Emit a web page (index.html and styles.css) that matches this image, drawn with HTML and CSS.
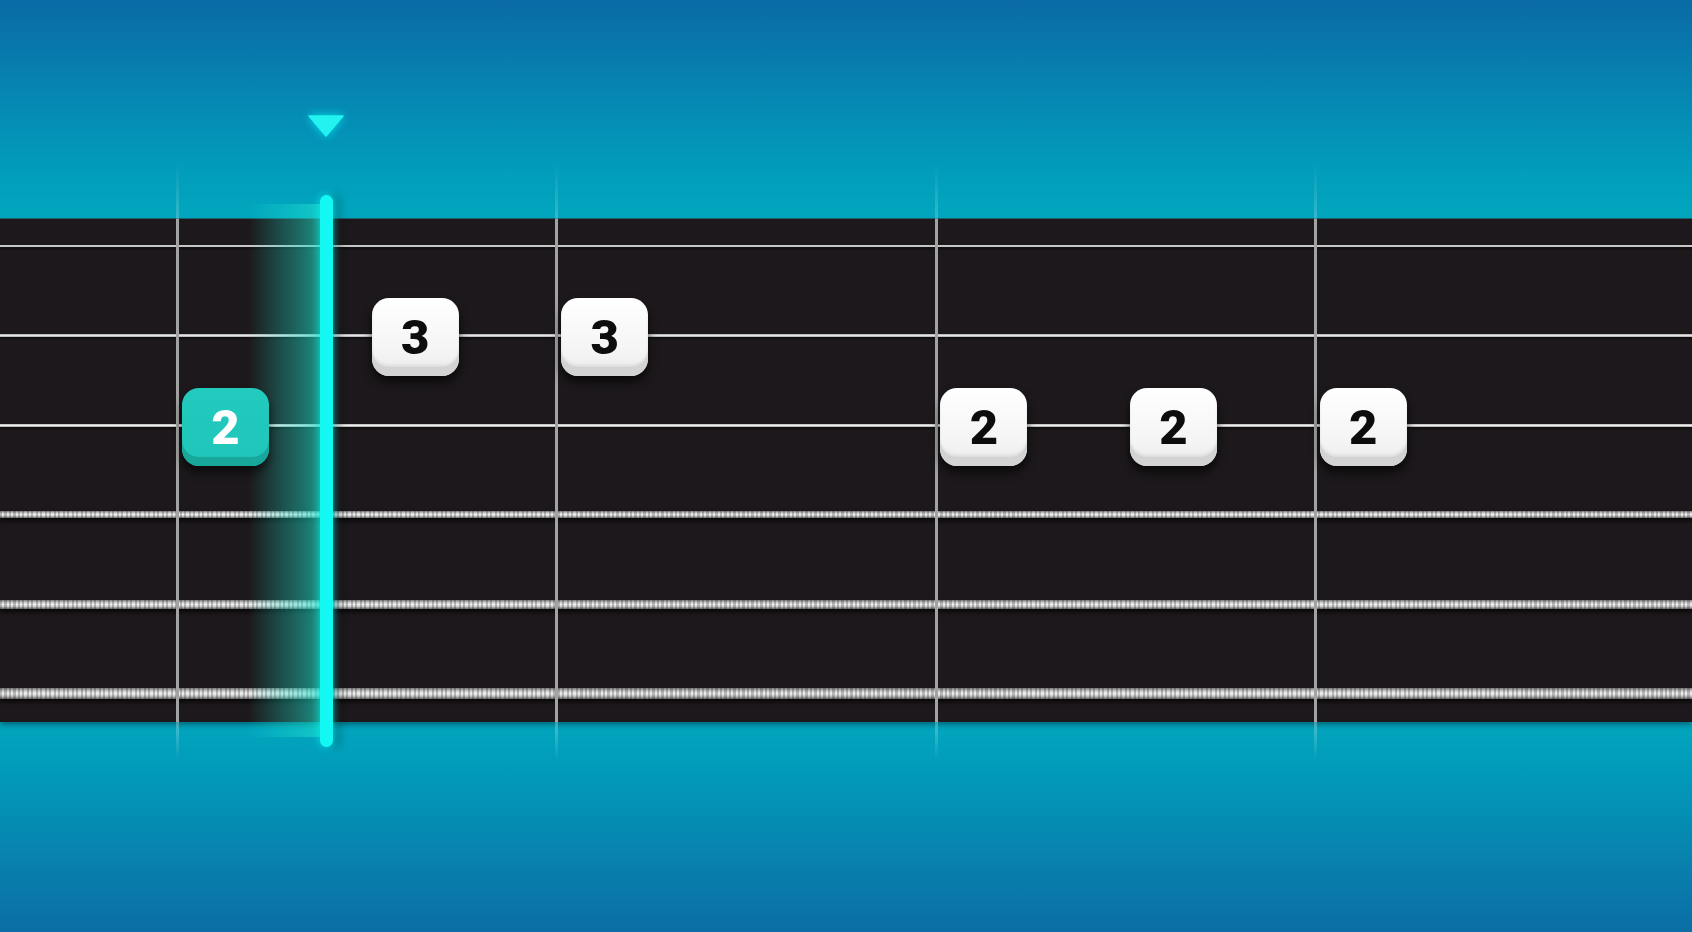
FILE: index.html
```html
<!DOCTYPE html>
<html>
<head>
  <meta charset="UTF-8">
  <meta name="viewport" content="width=device-width, initial-scale=1.0">
  <title>Tab Player</title>
  <link rel="stylesheet" href="styles.css">
</head>
<body>
  <div class="stage" id="stage">
    <div class="sky"></div>
    <div class="fretboard" id="fretboard">
      <div class="string"><span class="line plain thin"></span></div>
      <div class="string"><span class="line plain"></span></div>
      <div class="string"><span class="line plain thick"></span></div>
      <div class="string"><span class="line wound w4"></span></div>
      <div class="string"><span class="line wound w5"></span></div>
      <div class="string"><span class="line wound w6"></span></div>
    </div>
    <div class="ground"></div>

    <!-- playhead sits over everything -->
    <div class="trail"></div>
    <div class="playhead"></div>
    <svg class="marker" width="36" height="22" viewBox="0 0 36 22">
      <polygon points="1,1 35,1 18,21" fill="#22f3f1" stroke="#22f3f1" stroke-width="1.5" stroke-linejoin="round"/>
    </svg>
  </div>

  <script>
    // bar lines, one every measure
    var stage = document.getElementById('stage');
    var barStart = 177, barWidth = 379.6;
    for (var i = 0; i < 4; i++) {
      var bar = document.createElement('div');
      bar.className = 'bar';
      bar.style.left = (barStart + i * barWidth - 1.5) + 'px';
      stage.insertBefore(bar, stage.querySelector('.trail'));
    }

    // notes: beat index, string (1 = top), fret
    var notes = [
      { beat: 0, string: 3, fret: 2, played: true },
      { beat: 1, string: 2, fret: 3 },
      { beat: 2, string: 2, fret: 3 },
      { beat: 4, string: 3, fret: 2 },
      { beat: 5, string: 3, fret: 2 },
      { beat: 6, string: 3, fret: 2 }
    ];
    var stringY = [27, 117, 207, 296, 385, 475];
    var board = document.getElementById('fretboard');
    notes.forEach(function(n) {
      var el = document.createElement('div');
      el.className = 'note' + (n.played ? ' played' : '');
      el.textContent = n.fret;
      el.style.left = (225.5 + n.beat * 189.6 - 43.5) + 'px';
      el.style.top = (stringY[n.string - 1] - 38) + 'px';
      board.appendChild(el);
    });
  </script>
</body>
</html>
```

FILE: styles.css
```css
body {
  margin: 0;
  overflow: hidden;
  font-family: Roboto, "Noto Sans", sans-serif;
}
.stage {
  position: relative;
  height: 932px;
  display: flex;
  flex-direction: column;
  background: linear-gradient(180deg, #0a6aa5 0%, #0686b2 10%, #029cbb 18%, #01a7be 23.5%, #01a6be 77.5%, #0298b9 84%, #0882ae 92%, #0a6ea5 100%);
}
.sky {
  height: 219px;
  flex: none;
}
.ground {
  flex: 1;
}
.fretboard {
  position: relative;
  height: 503px;
  flex: none;
  box-sizing: border-box;
  padding: 21px 0 22px;
  display: flex;
  flex-direction: column;
  justify-content: space-between;
  background: #1c181b;
  box-shadow: 0 -1px 0 rgba(40, 70, 75, 0.7), 0 3px 5px rgba(0, 40, 50, 0.45);
}
.string {
  height: 12px;
  display: flex;
  align-items: center;
}
.line {
  display: block;
  width: 100%;
}
.plain {
  height: 3px;
  background: linear-gradient(180deg, #aaa, #e2e2e2 50%, #aaa);
  box-shadow: 0 2px 2px rgba(0, 0, 0, 0.45);
}
.plain.thin {
  height: 2px;
  background: #c6c6c6;
}
.plain.thick {
  height: 3px;
  background: linear-gradient(180deg, #b5b5b5, #ececec 50%, #a5a5a5);
}
.wound {
  background:
    repeating-linear-gradient(90deg, rgba(0, 0, 0, 0.22) 0 2px, rgba(0, 0, 0, 0) 2px 4.5px),
    linear-gradient(180deg, #7a7a7a 0%, #cfcfcf 28%, #f0f0f0 50%, #cdcdcd 72%, #666 100%);
  box-shadow: 0 3px 4px rgba(0, 0, 0, 0.7);
}
.w4 { height: 7px; }
.w5 { height: 9px; }
.w6 { height: 11px; }

.bar {
  position: absolute;
  top: 165px;
  width: 3px;
  height: 595px;
  background: linear-gradient(180deg,
    rgba(255, 255, 255, 0) 0,
    rgba(255, 255, 255, 0.2) 54px,
    #a2a2a2 54px,
    #a2a2a2 557px,
    rgba(255, 255, 255, 0.28) 557px,
    rgba(255, 255, 255, 0) 595px);
}

.note {
  position: absolute;
  z-index: 3;
  width: 87px;
  height: 78px;
  box-sizing: border-box;
  padding-top: 1px;
  border-radius: 17px;
  display: flex;
  align-items: center;
  justify-content: center;
  font-size: 49px;
  font-weight: 900;
  color: #0d0d0d;
  background: linear-gradient(180deg, #ffffff 0%, #f4f4f4 70%, #e9e9e9 100%);
  box-shadow: inset 0 -9px 0 #d3d3d3, inset 0 -11px 3px rgba(0, 0, 0, 0.08), 0 6px 10px rgba(0, 0, 0, 0.65);
}
.note.played {
  color: #fff;
  background: linear-gradient(180deg, #22cbbe 0%, #1fc5b8 100%);
  box-shadow: inset 0 -9px 0 #18a89b, 0 6px 10px rgba(0, 0, 0, 0.6);
}

.trail {
  position: absolute;
  z-index: 2;
  left: 248px;
  top: 204px;
  width: 76px;
  height: 533px;
  background: linear-gradient(90deg, rgba(30, 225, 205, 0) 0%, rgba(30, 225, 205, 0.22) 35%, rgba(30, 225, 205, 0.45) 75%, rgba(30, 225, 205, 0.65) 100%);
}
.playhead {
  position: absolute;
  z-index: 4;
  left: 320px;
  top: 195px;
  width: 13px;
  height: 552px;
  border-radius: 7px;
  background: #14f8f3;
  box-shadow: 0 0 8px rgba(0, 255, 250, 0.75), 7px 0 10px rgba(0, 0, 0, 0.25);
}
.marker {
  position: absolute;
  z-index: 4;
  left: 308px;
  top: 115px;
  filter: drop-shadow(0 0 5px rgba(0, 255, 250, 0.7));
}
```
